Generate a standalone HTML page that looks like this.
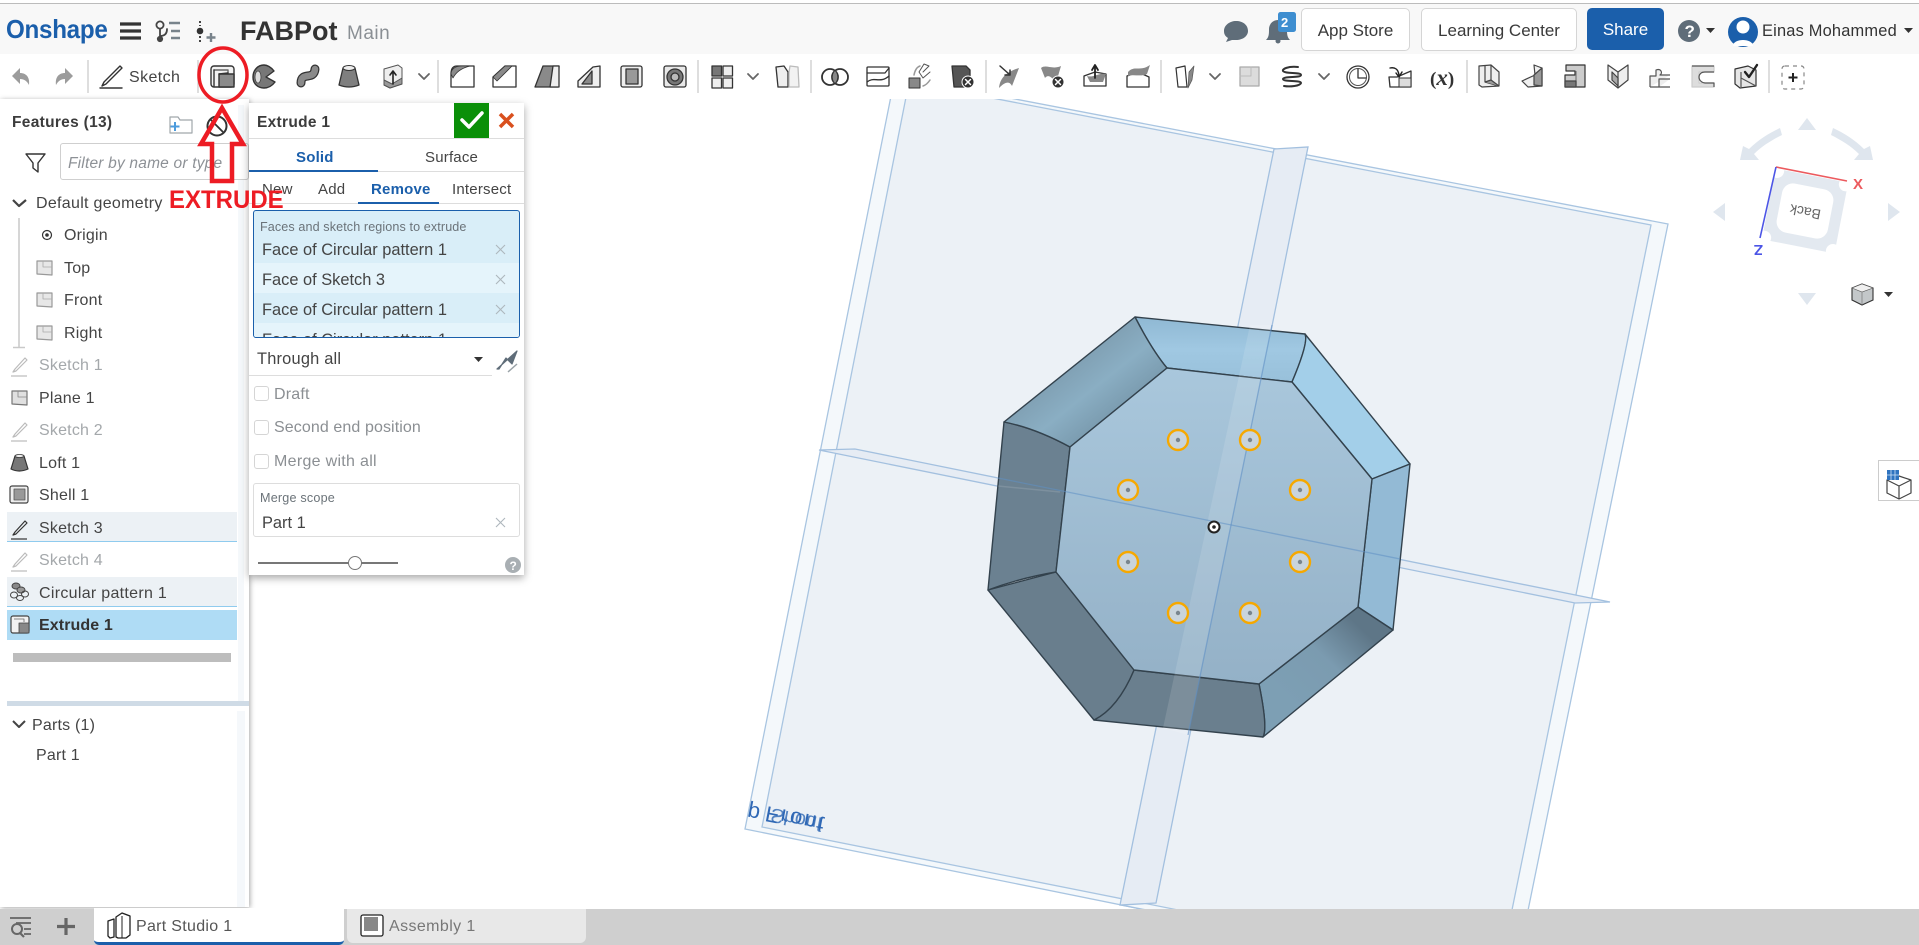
<!DOCTYPE html>
<html lang="en"><head><meta charset="utf-8"><title>FABPot - Onshape</title>
<style>
html,body{margin:0;padding:0;width:1919px;height:945px;overflow:hidden;background:#fff;font-family:"Liberation Sans",sans-serif;color:#444}
.a{position:absolute}
.t{position:absolute;white-space:nowrap;line-height:20px;height:20px;font-size:16px;letter-spacing:.2px}
.g{color:#a4a8ab}
svg{position:absolute;left:0;top:0}
.btn{position:absolute;top:8px;height:41px;border:1px solid #d5d5d5;border-radius:5px;background:#fff;text-align:center;line-height:43px;font-size:17px;color:#3a3a3a;box-sizing:content-box}
</style></head><body>

<!-- viewport -->
<svg width="1919" height="945" viewBox="0 0 1919 945">
<defs>
<linearGradient id="cf" x1="0" y1="0" x2="0" y2="1"><stop offset="0" stop-color="#a9c7dc"/><stop offset="1" stop-color="#94b1c7"/></linearGradient>
<linearGradient id="tp" x1="0" y1="0" x2="0" y2="1"><stop offset="0" stop-color="#8fb8d3"/><stop offset=".5" stop-color="#a0c8e2"/><stop offset="1" stop-color="#98c0da"/></linearGradient>
<linearGradient id="tl" x1="0" y1="0" x2="1" y2="1"><stop offset=".1" stop-color="#6e8798"/><stop offset=".55" stop-color="#8aaec3"/><stop offset="1" stop-color="#5f7a8c"/></linearGradient>
<linearGradient id="br" x1="0" y1="1" x2="1" y2="0"><stop offset=".25" stop-color="#7d9fb4"/><stop offset=".55" stop-color="#7b9bb0"/><stop offset=".8" stop-color="#5e7687"/></linearGradient>
</defs>
<!-- plane -->
<polygon points="895,76 1668,224 1513,984 745,829" fill="#f4f8fb"/>
<polygon points="909,82 1651,225 1499,974 762,827" fill="#ecf1f6"/>
<g fill="none" stroke="#a9c5e1" stroke-width="1.300">
<polygon points="895,76 1668,224 1513,984 745,829"/>
<polygon points="909,82 1651,225 1499,974 762,827"/>
</g>
<!-- strips -->
<polygon points="1274,149 1308,147 1156,903 1120,905" fill="#e6ecf4" stroke="#a3c0df" stroke-width="1.300"/>
<path d="M1120 905L1145 910L1175 912" fill="none" stroke="#a3c0df" stroke-width="1"/>
<polygon points="819,450 855,449 1610,602 1575,603" fill="#e6ecf4" stroke="#a3c0df" stroke-width="1.300"/>
<!-- part -->
<g stroke="#33424d" stroke-width="1.400" stroke-linejoin="round">
<path d="M1135 317L1305 334Q1309 342 1292 382L1167 368Q1152 350 1135 317Z" fill="url(#tp)"/>
<path d="M1305 334L1410 464L1372 479L1292 382Q1309 342 1305 334Z" fill="#a3cfe9"/>
<polygon points="1410,464 1393,630 1358,607 1372,479" fill="#93bad5"/>
<path d="M1393 630L1263 737Q1268 728 1259 684L1358 607Z" fill="url(#br)"/>
<path d="M1263 737L1094 720Q1118 708 1134 670L1259 684Q1268 728 1263 737Z" fill="#6a7f8e"/>
<path d="M1094 720L988 590L1056 572L1134 670Q1118 708 1094 720Z" fill="#697e8d"/>
<path d="M988 590L1004 422Q1035 428 1070 447L1056 572Q1020 578 988 590Z" fill="#6b8191"/>
<path d="M1004 422L1135 317Q1152 350 1167 368L1070 447Q1035 428 1004 422Z" fill="url(#tl)"/>
<polygon points="1167,368 1292,382 1372,479 1358,607 1259,684 1134,670 1056,572 1070,447" fill="url(#cf)"/>
</g>
<!-- strip overlay on part -->
<polygon points="1250,325 1272,325 1188,735 1163,728" fill="#fff" opacity=".12"/>
<path d="M1272 325L1188 735" stroke="#5f8fc4" stroke-width="1.300" opacity=".6" fill="none"/>
<path d="M998 478L1400 559" stroke="#5f8fc4" stroke-width="1.300" opacity=".55" fill="none"/>
<path d="M998 486L1060 492" stroke="#fff" stroke-width="1.500" opacity=".12" fill="none"/>
<!-- circles -->
<g fill="#c9d4dc" stroke="#f6a800" stroke-width="2.400">
<circle cx="1178" cy="440" r="10"/><circle cx="1250" cy="440" r="10"/>
<circle cx="1128" cy="490" r="10"/><circle cx="1300" cy="490" r="10"/>
<circle cx="1128" cy="562" r="10"/><circle cx="1300" cy="562" r="10"/>
<circle cx="1178" cy="613" r="10"/><circle cx="1250" cy="613" r="10"/>
</g>
<g fill="#79858e"><circle cx="1178" cy="440" r="2.200"/><circle cx="1250" cy="440" r="2.200"/><circle cx="1128" cy="490" r="2.200"/><circle cx="1300" cy="490" r="2.200"/><circle cx="1128" cy="562" r="2.200"/><circle cx="1300" cy="562" r="2.200"/><circle cx="1178" cy="613" r="2.200"/><circle cx="1250" cy="613" r="2.200"/></g>
<circle cx="1214" cy="527" r="5.500" fill="#fff" stroke="#222" stroke-width="2"/><circle cx="1214" cy="527" r="1.800" fill="#222"/>
<!-- plane name -->
<g font-family="Liberation Sans,sans-serif" fill="#2f68b5">
<text transform="translate(749,805) rotate(11) scale(1,-1)" font-size="22">p</text>
<text transform="translate(767,806) rotate(11) scale(1,-1)" font-size="22" letter-spacing="2">Front</text>
<text transform="translate(772,808) rotate(11) scale(1,-1)" font-size="20" opacity=".8">Shouf</text>
</g>
<!-- nav cube -->
<g fill="#dfe6ee">
<polygon points="1807,118 1816,130 1798,130"/>
<polygon points="1713,212 1725,203 1725,221"/>
<polygon points="1900,212 1888,203 1888,221"/>
<polygon points="1807,305 1798,293 1816,293"/>
<path d="M1740 160L1743 146L1749 149C1758 140 1769 133 1780 128L1782 135C1772 140 1762 146 1754 154L1759 160Z"/>
<path d="M1873 160L1870 146L1864 149C1855 140 1844 133 1833 128L1831 135C1841 140 1851 146 1859 154L1854 160Z"/>
</g>
<g transform="translate(1805,211) rotate(11)">
<rect x="-37" y="-36" width="74" height="72" rx="5" fill="#e3e9f0"/>
<rect x="-26" y="-25" width="52" height="50" rx="11" fill="#fff"/>
<circle cx="-35" cy="-34" r="7" fill="#fff"/><circle cx="35" cy="-34" r="7" fill="#fff"/><circle cx="-35" cy="34" r="7" fill="#fff"/><circle cx="35" cy="34" r="7" fill="#fff"/>
<text transform="rotate(180) translate(-16,4)" font-size="14" font-family="Liberation Sans,sans-serif" fill="#666">Back</text>
</g>
<path d="M1776 167L1847 181" stroke="#ec5a5e" stroke-width="1.600"/>
<path d="M1776 167L1760 238" stroke="#4c55e6" stroke-width="1.600"/>
<text x="1853" y="189" font-size="15" font-weight="bold" font-family="Liberation Sans,sans-serif" fill="#ec5a5e">X</text>
<text transform="translate(1763,245) rotate(180)" font-size="15" font-weight="bold" font-family="Liberation Sans,sans-serif" fill="#4c55e6">Z</text>
<!-- view icon -->
<path d="M1852 288L1862 284L1873 288L1873 300L1862 305L1852 300Z" fill="#c3c7c9" stroke="#333" stroke-width="1.100"/>
<path d="M1852 288L1862 292L1873 288L1862 284Z" fill="#f0f0f0" stroke="#555" stroke-width=".6"/>
<path d="M1862 292V305" stroke="#777" stroke-width=".7"/>
<polygon points="1884,292 1893,292 1888.500,297" fill="#333"/>
</svg>

<!-- header & toolbar -->
<div class="a" style="left:0;top:0;width:1919px;height:3px;background:#fff"></div>
<div class="a" style="left:0;top:3px;width:1919px;height:1px;background:#bcbcbc"></div>
<div class="a" style="left:0;top:4px;width:1919px;height:50px;background:#f8f8f8"></div>
<div class="a" style="left:0;top:54px;width:1919px;height:45px;background:#fff"></div>

<div class="a" style="left:6px;top:16px;line-height:26px;font-size:26px;font-weight:bold;color:#1b5fab;transform:scaleX(.93);transform-origin:left;letter-spacing:-.3px">Onshape</div>
<div class="a" style="left:240px;top:15px;line-height:32px;font-size:27px;font-weight:bold;color:#333;letter-spacing:0">FABPot</div>
<div class="a" style="left:347px;top:22px;line-height:24px;font-size:19px;color:#8a8f94;letter-spacing:.5px">Main</div>
<div class="btn" style="left:1301px;width:107px">App Store</div>
<div class="btn" style="left:1421px;width:154px">Learning Center</div>
<div class="btn" style="left:1587px;width:77px;height:42px;border:0;background:#1b5fab;color:#fff;line-height:44px">Share</div>
<div class="t" style="left:1762px;top:21px;font-size:16.400px;color:#333">Einas Mohammed</div>
<div class="t" style="left:129px;top:68px;font-size:16px;color:#444;letter-spacing:.4px">Sketch</div>

<!-- side button -->
<div class="a" style="left:1878px;top:460px;width:41px;height:41px;background:#fff;border:1px solid #ccc;box-sizing:border-box;border-right:0"></div>

<!-- left panel -->
<div class="a" style="left:0;top:99px;width:249px;height:808px;background:#fff;box-shadow:1px 1px 5px rgba(0,0,0,.35)"></div>
<div class="a" style="left:238px;top:105px;width:6px;height:596px;background:#f5f8fb"></div>
<div class="a" style="left:237px;top:711px;width:8px;height:196px;background:#f5f8fb"></div>
<div class="a" style="left:7px;top:512px;width:230px;height:30px;background:#ecf1f5;border-bottom:1px solid #8fcbee;box-sizing:border-box"></div>
<div class="a" style="left:7px;top:577px;width:230px;height:30px;background:#ecf1f5;border-bottom:1px solid #8fcbee;box-sizing:border-box"></div>
<div class="a" style="left:7px;top:610px;width:230px;height:30px;background:#afdcf5"></div>
<div class="a" style="left:13px;top:653px;width:218px;height:9px;background:#bdbdbd"></div>
<div class="a" style="left:7px;top:701px;width:242px;height:5px;background:#cfdbe6"></div>
<div class="a" style="left:60px;top:143px;width:189px;height:37px;border:1px solid #cfcfcf;border-radius:3px;box-sizing:border-box;background:#fff"></div>

<div class="t" style="left:12px;top:113px;font-size:15.500px;font-weight:bold;color:#3c3c3c;letter-spacing:.3px">Features (13)</div>
<div class="t" style="left:68px;top:154px;font-size:15.500px;font-style:italic;color:#8d9196">Filter by name or type</div>
<div class="t" style="left:36px;top:194px;letter-spacing:.3px">Default geometry</div>
<div class="t" style="left:64px;top:226px">Origin</div>
<div class="t" style="left:64px;top:259px">Top</div>
<div class="t" style="left:64px;top:291px">Front</div>
<div class="t" style="left:64px;top:324px">Right</div>
<div class="t g" style="left:39px;top:356px">Sketch 1</div>
<div class="t" style="left:39px;top:389px">Plane 1</div>
<div class="t g" style="left:39px;top:421px">Sketch 2</div>
<div class="t" style="left:39px;top:454px">Loft 1</div>
<div class="t" style="left:39px;top:486px">Shell 1</div>
<div class="t" style="left:39px;top:519px">Sketch 3</div>
<div class="t g" style="left:39px;top:551px">Sketch 4</div>
<div class="t" style="left:39px;top:584px;letter-spacing:.3px">Circular pattern 1</div>
<div class="t" style="left:39px;top:616px;font-weight:bold;color:#333;letter-spacing:.1px">Extrude 1</div>
<div class="t" style="left:32px;top:716px">Parts (1)</div>
<div class="t" style="left:36px;top:746px">Part 1</div>

<!-- extrude dialog -->
<div class="a" style="left:249px;top:103px;width:275px;height:472px;background:#fff;box-shadow:0 3px 8px rgba(0,0,0,.35)"></div>
<div class="a" style="left:454px;top:103px;width:35px;height:35px;background:#0a8f08"></div>
<div class="a" style="left:249px;top:138px;width:275px;height:1px;background:#ddd"></div>
<div class="a" style="left:249px;top:171px;width:275px;height:1px;background:#ddd"></div>
<div class="a" style="left:249px;top:170px;width:129px;height:2px;background:#1b5fab"></div>
<div class="a" style="left:249px;top:203px;width:275px;height:1px;background:#ddd"></div>
<div class="a" style="left:358px;top:202px;width:81px;height:2px;background:#1b5fab"></div>
<div class="a" style="left:253px;top:210px;width:267px;height:128px;background:#d9eef8;border:1px solid #1b5fab;border-radius:3px;box-sizing:border-box;overflow:hidden">
<div class="a" style="left:0;top:52px;width:267px;height:30px;background:#e5f4fb"></div>
<div class="a" style="left:0;top:112px;width:267px;height:16px;background:#e5f4fb"></div>
<div class="t" style="left:8px;top:119px;font-size:16.400px;color:#444;letter-spacing:0">Face of Circular pattern 1</div>
</div>
<div class="t" style="left:257px;top:113px;font-size:15.500px;font-weight:bold;color:#3c3c3c;letter-spacing:.3px">Extrude 1</div>
<div class="t" style="left:296px;top:148px;font-size:15px;font-weight:bold;color:#1b5fab">Solid</div>
<div class="t" style="left:425px;top:148px;font-size:15px">Surface</div>
<div class="t" style="left:262px;top:180px;font-size:15px">New</div>
<div class="t" style="left:318px;top:180px;font-size:15px">Add</div>
<div class="t" style="left:371px;top:180px;font-size:15px;font-weight:bold;color:#1b5fab">Remove</div>
<div class="t" style="left:452px;top:180px;font-size:15px">Intersect</div>
<div class="t" style="left:260px;top:217px;font-size:12.600px;color:#6b7379;letter-spacing:.1px">Faces and sketch regions to extrude</div>
<div class="t" style="left:262px;top:240px;font-size:16.400px;letter-spacing:0">Face of Circular pattern 1</div>
<div class="t" style="left:262px;top:270px;font-size:16.400px;letter-spacing:0">Face of Sketch 3</div>
<div class="t" style="left:262px;top:300px;font-size:16.400px;letter-spacing:0">Face of Circular pattern 1</div>
<div class="t" style="left:257px;top:349px;font-size:16.400px">Through all</div>
<div class="a" style="left:249px;top:375px;width:243px;height:1px;background:#ddd"></div>
<div class="a" style="left:254px;top:386px;width:15px;height:15px;border:1px solid #d5d5d5;border-radius:3px;box-sizing:border-box"></div>
<div class="a" style="left:254px;top:420px;width:15px;height:15px;border:1px solid #d5d5d5;border-radius:3px;box-sizing:border-box"></div>
<div class="a" style="left:254px;top:454px;width:15px;height:15px;border:1px solid #d5d5d5;border-radius:3px;box-sizing:border-box"></div>
<div class="t" style="left:274px;top:385px;color:#8b8f93">Draft</div>
<div class="t" style="left:274px;top:418px;color:#8b8f93;letter-spacing:.1px">Second end position</div>
<div class="t" style="left:274px;top:452px;color:#8b8f93;letter-spacing:.3px">Merge with all</div>
<div class="a" style="left:253px;top:483px;width:267px;height:54px;border:1px solid #ddd;border-radius:3px;box-sizing:border-box"></div>
<div class="t" style="left:260px;top:488px;font-size:12.600px;color:#6b7379">Merge scope</div>
<div class="t" style="left:262px;top:513px;font-size:16.400px;letter-spacing:0">Part 1</div>
<div class="a" style="left:258px;top:562px;width:140px;height:2px;background:#777"></div>
<div class="a" style="left:348px;top:556px;width:14px;height:14px;border:1.500px solid #777;border-radius:50%;background:#fff;box-sizing:border-box"></div>

<!-- tab bar -->
<div class="a" style="left:0;top:909px;width:1919px;height:36px;background:#cfcfcf"></div>
<div class="a" style="left:94px;top:908px;width:250px;height:37px;background:#fff;border-bottom:3px solid #1b5fab;border-radius:0 0 5px 5px;box-sizing:border-box"></div>
<div class="a" style="left:347px;top:909px;width:239px;height:34px;background:#e8e8e8;border-radius:0 0 6px 6px"></div>
<div class="t" style="left:136px;top:917px;color:#555;letter-spacing:.3px">Part Studio 1</div>
<div class="t" style="left:389px;top:917px;color:#777;letter-spacing:.4px">Assembly 1</div>

<!-- icons -->
<svg width="1919" height="945" viewBox="0 0 1919 945">
<g fill="none" stroke="#555" stroke-linecap="round" stroke-linejoin="round">
<!-- header -->
<path d="M120 24H141M120 31H141M120 38H141" stroke="#333" stroke-width="3.200" stroke-linecap="butt"/>
<g stroke="#444" stroke-width="1.800"><circle cx="160" cy="25" r="3.600"/><circle cx="160" cy="39" r="2.200" fill="#444"/><path d="M160 29V37M160 36C166 36 167 32 167 29"/></g>
<path d="M169 23H180M171 31H180M171 38H180" stroke="#78838b" stroke-width="2.400" stroke-linecap="butt"/>
<path d="M200 21V26M200 36V42" stroke="#444" stroke-width="2" stroke-dasharray="2 2" stroke-linecap="butt"/><circle cx="200" cy="31" r="3.300" fill="#333" stroke="none"/>
<path d="M211 33V42M206.500 37.500H215.500" stroke="#78838b" stroke-width="2.400" stroke-linecap="butt"/>
<path d="M1224 31C1224 25 1230 21 1236 21C1243 21 1248 25 1248 31C1248 36 1243 40 1236 40L1232 40L1226 42L1228 38C1225 36 1224 34 1224 31Z" fill="#5f6d79" stroke="none"/>
<path d="M1266 40C1269 37 1269 34 1269 29C1269 24 1273 20 1278 20C1283 20 1287 24 1287 29C1287 34 1287 37 1290 40Z" fill="#5f6d79" stroke="none"/><circle cx="1278" cy="41" r="2.500" fill="#5f6d79" stroke="none"/>
<rect x="1278" y="12" width="18" height="20" rx="2.500" fill="#3e8ed0" stroke="none"/>
<circle cx="1689" cy="31" r="11" fill="#5f6d79" stroke="none"/>
<polygon points="1706,28 1715,28 1710.500,33" fill="#333" stroke="none"/>
<circle cx="1743" cy="32" r="15" fill="#1b5fab" stroke="none"/>
<circle cx="1743" cy="27" r="6.500" fill="#fff" stroke="none"/><path d="M1733 46C1733 38 1753 38 1753 46Z" fill="#fff" stroke="none"/>
<polygon points="1904,28 1913,28 1908.500,33" fill="#333" stroke="none"/>

<!-- toolbar dividers -->
<path d="M88 60V93M198 60V93M438 60V93M698 60V93M811 60V93M986 60V93M1161 60V93M1467 60V93M1769 60V93" stroke="#d4d4d4" stroke-width="1.500" stroke-linecap="butt"/>
<path d="M12 76L20 68V73C26 73 30 77 29 85C27 81 24 79 20 79V84Z" fill="#9c9c9c" stroke="none"/>
<path d="M73 76L65 68V73C59 73 55 77 56 85C58 81 61 79 65 79V84Z" fill="#9c9c9c" stroke="none"/>
<g stroke="#333" stroke-width="1.400"><path d="M104 82L120 66L122 68L106 84L102 86Z"/><path d="M100 88H122"/></g>

<!-- extrude -->
<g stroke="#333" stroke-width="1.400"><rect x="211" y="66" width="23" height="21" rx="3" fill="#f2f2f2"/><path d="M214 70H228V73" stroke="#666"/><rect x="219" y="74" width="15" height="13" fill="#8a8a8a"/><path d="M214 70V86M219 74L228 73"/></g>
<!-- revolve -->
<path d="M274 71C271 67 267 65 264 65C258 65 253 70 253 77C253 84 258 88 264 88C268 88 272 86 275 82L266 77Z" fill="#777" stroke="#333" stroke-width="1.400"/><ellipse cx="258" cy="77" rx="3" ry="6" fill="#ddd" stroke="#444" stroke-width=".8"/>
<!-- sweep -->
<path d="M301 83C301 71 314 81 315 69" stroke="#333" stroke-width="9" stroke-linecap="round"/><path d="M301 83C301 71 314 81 315 69" stroke="#8a8a8a" stroke-width="6.500" stroke-linecap="round"/>
<!-- loft -->
<path d="M343 68H355L359 85Q349 89 339 85Z" fill="#7f7f7f" stroke="#333" stroke-width="1.300"/><ellipse cx="349" cy="68" rx="6" ry="2.500" fill="#eee" stroke="#333" stroke-width="1"/>
<!-- thicken -->
<g stroke="#555" stroke-width="1"><path d="M384 69L398 65L402 68V84L390 88L384 85Z" fill="#eee"/><path d="M384 80L392 84L402 78V84L390 88L384 85Z" fill="#999"/><path d="M393 84V72M390 75L393 71L396 75" stroke="#222" stroke-width="1.600"/></g>
<path d="M419 74L424 79L429 74" stroke="#666" stroke-width="1.800"/>
<!-- fillet chamfer draft rib shell hole -->
<g stroke="#333" stroke-width="1.300">
<path d="M457 66H474V87H451V74C451 69 453 66 457 66Z" fill="#fff"/><path d="M451 74C451 69 455 66 462 66H470C462 68 456 72 453 78Z" fill="#8a8a8a" stroke-width=".8"/>
<path d="M505 66H516V87H493V77Z" fill="#fff"/><path d="M505 66H512L497 81L493 77Z" fill="#8a8a8a" stroke-width=".8"/>
<path d="M543 66H559L558 87H535Z" fill="#8a8a8a"/><path d="M553 66H559V87H550Z" fill="#eee"/>
<path d="M593 67L600 66V87H578V81Z" fill="#eee"/><path d="M592 71V84H582Z" fill="#8a8a8a"/>
<rect x="621" y="66" width="21" height="21" rx="2" fill="#eee"/><path d="M626 69H638V84H626Z" fill="#999"/>
<rect x="664" y="66" width="22" height="21" rx="2" fill="#e8e8e8"/><circle cx="675" cy="77" r="8" fill="#777"/><circle cx="675" cy="77" r="4" fill="#bbb"/>
</g>
<!-- pattern -->
<g stroke="#333" stroke-width="1.300"><rect x="712" y="66" width="9.500" height="10" fill="#777"/><rect x="723" y="66" width="9.500" height="10" fill="#eee"/><rect x="712" y="78" width="9.500" height="10" fill="#eee"/><rect x="723" y="78" width="9.500" height="10" fill="#eee"/></g>
<path d="M748 74L753 79L758 74" stroke="#666" stroke-width="1.800"/>
<!-- mirror -->
<path d="M776 67L784 66L788 72V87H778Z" fill="#eee" stroke="#333" stroke-width="1.300"/><path d="M798 67L790 66L789 72V87H799Z" fill="#f2f2f2" stroke="#bbb" stroke-width="1.300"/>
<!-- boolean -->
<circle cx="830" cy="77" r="8" stroke="#333" stroke-width="1.800"/><circle cx="840" cy="77" r="8" stroke="#333" stroke-width="1.800"/><path d="M835 71C838 74 838 80 835 83C832 80 832 74 835 71Z" fill="#888" stroke="none"/>
<!-- split -->
<g stroke="#333" stroke-width="1.300"><rect x="867" y="67" width="22" height="19" rx="1" fill="#fff"/><path d="M867 73H885L889 68M867 82C874 76 880 84 889 76"/></g>
<!-- transform -->
<g><rect x="909" y="78" width="11" height="10" fill="#888" stroke="#333" stroke-width="1"/><path d="M923 72L929 66L924 64L919 72L923 78L930 72" stroke="#555" stroke-width="1" fill="#fff"/><path d="M914 75C915 70 917 67 920 66M923 86C926 85 928 83 930 80" stroke="#999" stroke-width="1.500"/></g>
<!-- delete part -->
<path d="M952 66H966L970 70V87H954Z" fill="#555" stroke="#333" stroke-width="1.300"/><circle cx="968" cy="82" r="6" fill="#333" stroke="#fff"/><path d="M965.500 79.500L970.500 84.500M970.500 79.500L965.500 84.500" stroke="#fff" stroke-width="1.500"/>
<!-- move face -->
<path d="M999 88C1000 78 1006 72 1019 68L1012 86C1009 80 1004 83 999 88Z" fill="#888" stroke="none"/><path d="M1000 66L1009 74M1005 75H1010V70" stroke="#333" stroke-width="1.500"/>
<!-- delete face -->
<path d="M1041 68C1046 64 1052 70 1061 66L1056 83C1052 77 1048 74 1045 78Z" fill="#888" stroke="none"/><circle cx="1058" cy="82" r="6" fill="#333" stroke="#fff"/><path d="M1055.500 79.500L1060.500 84.500M1060.500 79.500L1055.500 84.500" stroke="#fff" stroke-width="1.500"/>
<!-- replace/offset -->
<path d="M1084 76L1095 72L1106 74V86H1084Z" fill="#fff" stroke="#333" stroke-width="1.300"/><path d="M1087 76C1094 78 1100 72 1106 74L1103 82H1090Z" fill="#888" stroke="none"/><path d="M1095 78V67M1092 70L1095 65L1098 70" stroke="#222" stroke-width="1.800"/>
<!-- modify -->
<path d="M1127 76L1138 72L1149 77V87H1127Z" fill="#fff" stroke="#333" stroke-width="1.300"/><path d="M1128 72C1134 65 1140 72 1150 65L1147 74C1140 77 1134 74 1128 76Z" fill="#888" stroke="none"/>
<!-- surface etc. -->
<path d="M1176 68L1185 66L1187 87L1178 87Z" fill="#fff" stroke="#333" stroke-width="1.200"/><path d="M1189 72L1194 66L1192 80L1188 88Z" fill="#888" stroke="#555" stroke-width=".7"/>
<path d="M1210 74L1215 79L1220 74" stroke="#666" stroke-width="1.800"/>
<rect x="1240" y="67" width="19" height="19" fill="#dcdcdc" stroke="#aaa" stroke-width="1.300"/><path d="M1251 67V76H1240" stroke="#bbb"/>
<!-- helix -->
<path d="M1298 67C1288 66 1282 69 1283 71C1285 74 1301 72 1301 75C1301 78 1284 76 1283 79C1283 82 1301 80 1301 83C1300 86 1290 87 1284 86" stroke="#333" stroke-width="2"/>
<path d="M1319 74L1324 79L1329 74" stroke="#666" stroke-width="1.800"/>
<circle cx="1358" cy="77" r="11" stroke="#333" stroke-width="1.300"/><circle cx="1358" cy="77" r="8.500" stroke="#555" stroke-width="1"/><path d="M1358 69V78H1366" stroke="#333" stroke-width="1.300"/>
<path d="M1389 77H1397L1411 71V87H1390Z" fill="#fff" stroke="#333" stroke-width="1.300"/><path d="M1399 78H1411V87H1399Z" fill="#ddd" stroke="#333"/><path d="M1390 68C1395 67 1398 69 1399 75M1396 73L1399 77L1402 72" stroke="#222" stroke-width="1.400"/>
</g>
<text x="1430" y="85" font-family="Liberation Serif,serif" font-size="23" font-weight="bold" fill="#333"><tspan font-size="19">(</tspan><tspan font-style="italic">x</tspan><tspan font-size="19">)</tspan></text>
<g fill="none" stroke="#444" stroke-width="1.200" stroke-linejoin="round">
<path d="M1479 66L1491 65L1499 72V86L1482 87L1479 85Z" fill="#eee"/><path d="M1485 66V82L1499 86M1491 65V80" fill="none"/><path d="M1485 82L1491 80L1499 86" fill="#999"/>
<path d="M1522 81L1535 75L1534 65L1542 68V86L1528 87Z" fill="#f0f0f0"/><path d="M1534 75L1542 68V86L1534 85Z" fill="#999"/>
<path d="M1566 65H1585V87H1565V75H1575V71H1566Z" fill="#ccc" stroke="#333"/><path d="M1576 87V71" stroke="#777"/><rect x="1565" y="81" width="11" height="6" fill="#777"/>
<path d="M1608 65L1618 72L1628 65V80L1618 88L1608 80Z" fill="#eee"/><path d="M1618 72V88"/><path d="M1612 72L1618 78V86L1612 80Z" fill="#aaa"/>
<path d="M1650 87V76H1656V70C1661 68 1663 73 1660 75H1670M1650 87H1670M1659 87V79H1670" stroke="#555" fill="#eee"/>
<path d="M1692 66H1714V72H1699V83H1714V87H1692Z" fill="#ddd" stroke="#ccc"/><path d="M1692 66H1714M1714 72H1705C1697 72 1697 82 1705 83H1714V87" stroke="#555"/>
<path d="M1735 69L1748 66L1756 70V86L1740 88L1735 84Z" fill="#e6e6e6" stroke="#333"/><path d="M1741 72V87M1741 78L1756 86" stroke="#555"/><path d="M1745 72L1749 77L1757 65" stroke="#222" stroke-width="2.400" stroke-linecap="round"/>
<rect x="1782" y="66" width="22" height="23" rx="3" stroke="#888" stroke-dasharray="4 4"/>
<path d="M1793 73V82M1788.500 77.500H1797.500" stroke="#222" stroke-width="2"/>
</g>

<!-- panel icons -->
<g fill="none" stroke="#777" stroke-width="1.200" stroke-linejoin="round">
<path d="M170 117H178L180 120H192V133H170Z" stroke="#a0a6ab" fill="#fff"/>
<path d="M175 122V131M170.500 126.500H179.500" stroke="#4c9bdc" stroke-width="2"/>
<circle cx="217" cy="126" r="9.500" stroke="#333" stroke-width="2"/>
<path d="M211 120L223 132" stroke="#333" stroke-width="1.800"/>
<path d="M26 154H45L38 163V172L33 168V163Z" stroke="#333" stroke-width="1.400"/>
<path d="M13 200L19 206L26 200" stroke="#444" stroke-width="2.200"/>
<path d="M19 218V347M13 347.500H25" stroke="#c9c9c9" stroke-width="1.500"/>
<circle cx="47" cy="235" r="4.500" stroke="#333" stroke-width="1.200"/>
<circle cx="47" cy="235" r="1.800" fill="#333" stroke="none"/>
<path d="M37 261H52V275L37 274Z" fill="#e7e7e7" stroke="#999"/><path d="M37 293H52V307L37 306Z" fill="#e7e7e7" stroke="#999"/><path d="M37 326H52V340L37 339Z" fill="#e7e7e7" stroke="#999"/>
<path d="M43 261V267H52M43 293V299H52M43 326V332H52" stroke="#aaa" stroke-width=".8"/>
<path d="M12 391H27V405L12 404Z" fill="#e0e0e0" stroke="#777"/><path d="M18 391V397H27" stroke="#888" stroke-width=".8"/>
<!-- pencils -->
<g stroke="#bbb" stroke-width="1.200"><path d="M15 369L25 358L27 360L16 371L13 372Z"/><path d="M11 376H27"/><path d="M15 434L25 423L27 425L16 436L13 437Z"/><path d="M11 441H27"/><path d="M15 564L25 553L27 555L16 566L13 567Z"/><path d="M11 571H27"/></g>
<g stroke="#333" stroke-width="1.200"><path d="M15 532L25 521L27 523L16 534L13 535Z"/><path d="M11 539H27"/></g>
<!-- loft shell -->
<path d="M15 456H24L28 469Q19 473 11 469Z" fill="#777" stroke="#333"/>
<ellipse cx="19.500" cy="456" rx="4.500" ry="1.500" fill="#eee" stroke="#333" stroke-width=".8"/>
<rect x="10" y="486" width="18" height="17" rx="2" fill="#eee" stroke="#444"/><path d="M14 489H25V500H14Z" fill="#999" stroke="#555" stroke-width=".8"/>
<!-- pattern -->
<g stroke="#444" stroke-width="1"><ellipse cx="16" cy="586" rx="4" ry="3" fill="#888"/><ellipse cx="21" cy="590" rx="4" ry="3" fill="#999"/><ellipse cx="25" cy="594" rx="3.500" ry="3"/><ellipse cx="14" cy="595" rx="3.500" ry="3"/><ellipse cx="20" cy="598" rx="3.500" ry="2.500"/></g>
<!-- extrude row -->
<rect x="11" y="616" width="18" height="17" rx="2" fill="#f2f2f2" stroke="#444"/><rect x="19" y="623" width="10" height="10" fill="#888" stroke="#444" stroke-width=".8"/><path d="M14 619H24V622" stroke="#666" stroke-width=".8"/>
<path d="M13 721L19 727L25 721" stroke="#444" stroke-width="2"/>
<!-- dialog -->
<path d="M462 120L469 127L482 113" stroke="#fff" stroke-width="3.500" stroke-linecap="round"/>
<path d="M500 114L513 127M513 114L500 127" stroke="#d9501e" stroke-width="3.500"/>
<g stroke="#aeb7bc" stroke-width="1.100"><path d="M496 245L505 254M505 245L496 254"/><path d="M496 275L505 284M505 275L496 284"/><path d="M496 305L505 314M505 305L496 314"/><path d="M496 518L505 527M505 518L496 527"/></g>
<polygon points="474,357 483,357 478.500,362" fill="#333" stroke="none"/>
<path d="M497 369L517 351L512 364L506 358L499 369Z" fill="#5f6d79" stroke="#5f6d79"/>
<path d="M508 372L517 364" stroke="#9aa3a8" stroke-width="1.500"/>
<circle cx="513" cy="565" r="8" fill="#a9afb3" stroke="none"/>
<!-- tab bar -->
<path d="M10 918H31M16 923H31M24 929H31M24 934H31" stroke="#666" stroke-width="1.800"/>
<circle cx="17" cy="929" r="5" stroke="#666" stroke-width="2"/><path d="M20 933L24 937" stroke="#666" stroke-width="2.200"/>
<path d="M66 918V935M57 926.500H75" stroke="#666" stroke-width="3.200"/>
<path d="M108 921L114 919V937L110 938L108 936Z" stroke="#222" stroke-width="1.300" fill="#fff"/><path d="M116 937V917L122 913L130 916V935L126 938L118 938Z" stroke="#222" stroke-width="1.300" fill="#fff"/><path d="M122 916V938" stroke="#222" stroke-width="1"/>
<rect x="361" y="915" width="22" height="21" rx="2" fill="#fff" stroke="#222" stroke-width="1.300"/><rect x="364" y="917" width="14" height="14" fill="#888" stroke="none"/>
<!-- side button icon -->
<path d="M1887 480L1899 476L1911 480V493L1899 499L1887 493Z" fill="#fff" stroke="#444"/><path d="M1887 480L1899 486L1911 480M1899 486V499" stroke="#444"/>
<rect x="1887" y="470" width="12" height="10" fill="#2f74c0" stroke="none"/>
<path d="M1891 470V480M1895 470V480M1887 475H1899" stroke="#cfe2f5" stroke-width=".8"/>
</g>
<text x="1281" y="27" font-family="Liberation Sans,sans-serif" font-size="13" font-weight="bold" fill="#fff">2</text>
<text x="1684.500" y="37" font-family="Liberation Sans,sans-serif" font-size="17" font-weight="bold" fill="#fff">?</text>
<text x="509.500" y="570" font-family="Liberation Sans,sans-serif" font-size="12" font-weight="bold" fill="#fff">?</text>
</svg>

<!-- annotation -->
<svg width="1919" height="945" viewBox="0 0 1919 945">
<ellipse cx="223" cy="75" rx="24" ry="27" fill="none" stroke="#ed1c24" stroke-width="3.500"/>
<path d="M222 108L243 144H232V181H212V144H201Z" fill="none" stroke="#ed1c24" stroke-width="4.500" stroke-linejoin="miter"/>
</svg>
<div class="a" style="left:169px;top:187px;line-height:27px;font-size:25px;font-weight:bold;color:#ed1c24;white-space:nowrap;transform:scaleX(.96);transform-origin:left">EXTRUDE</div>
</body></html>
